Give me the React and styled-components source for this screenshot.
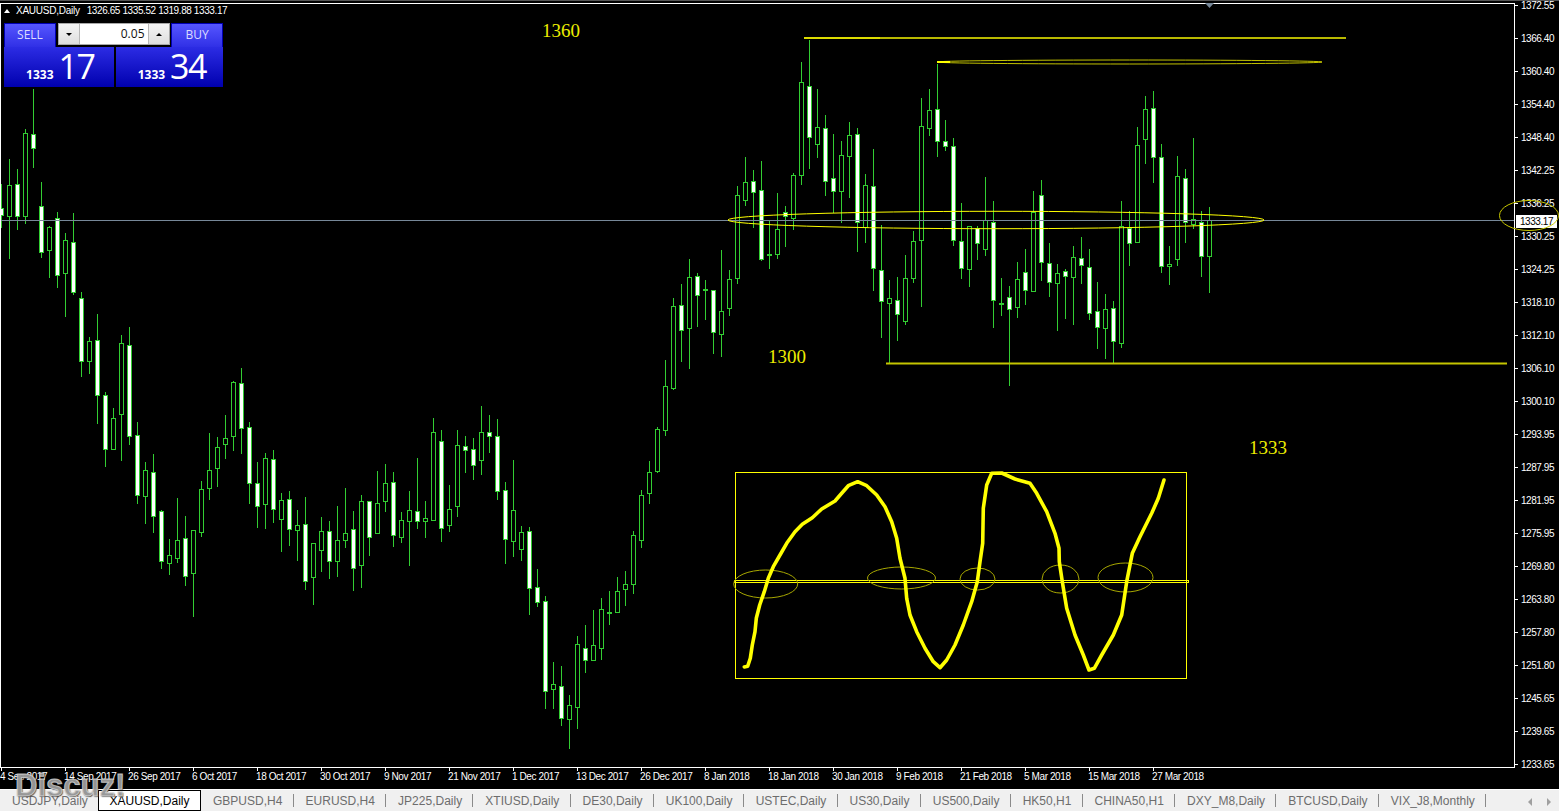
import React from 'react';
import styled, { createGlobalStyle } from 'styled-components';

const GlobalStyle = createGlobalStyle`
  html, body {
    margin: 0;
    padding: 0;
    background: #000;
    overflow: hidden;
  }
`;

const UP = '#32cd32';
const YELLOW = '#ffff00';
const AXIS_FONT = `'Liberation Sans', Arial, sans-serif`;

// [high, low, bodyTop, bodyBottom, bearish] in page pixels, one candle every 8px from x=1
const candles = [
  [184, 228, 208, 215, 1], [159, 259, 185, 216, 0], [169, 230, 184, 216, 1], [129, 224, 133, 216, 0],
  [89, 168, 134, 148, 1], [182, 258, 206, 252, 1], [226, 278, 227, 250, 0], [212, 288, 218, 275, 1],
  [233, 317, 240, 273, 0], [213, 295, 242, 292, 1], [292, 377, 298, 361, 1], [337, 374, 341, 361, 0],
  [314, 424, 340, 395, 1], [392, 467, 395, 449, 1], [408, 450, 418, 449, 0], [335, 461, 343, 414, 0],
  [327, 445, 345, 436, 1], [422, 504, 435, 495, 1], [462, 524, 470, 496, 0], [454, 533, 472, 516, 1],
  [510, 569, 511, 561, 1], [539, 575, 555, 563, 0], [498, 563, 540, 558, 0], [516, 586, 538, 576, 1],
  [530, 617, 530, 573, 0], [481, 537, 489, 532, 0], [433, 500, 470, 488, 0], [437, 487, 447, 468, 0],
  [415, 459, 438, 444, 0], [381, 451, 382, 436, 0], [368, 454, 383, 428, 1], [422, 504, 427, 483, 1],
  [462, 528, 483, 506, 1], [453, 529, 458, 504, 0], [450, 523, 459, 509, 1], [493, 552, 500, 519, 0],
  [491, 546, 499, 529, 1], [510, 561, 525, 530, 0], [497, 590, 524, 581, 1], [543, 605, 543, 577, 0],
  [517, 572, 531, 550, 0], [521, 579, 531, 561, 1], [506, 577, 540, 561, 0], [488, 548, 533, 540, 0],
  [511, 591, 529, 568, 1], [495, 588, 501, 565, 0], [501, 556, 501, 537, 1], [471, 533, 503, 533, 0],
  [464, 512, 483, 501, 0], [472, 547, 482, 535, 1], [512, 543, 520, 537, 0], [491, 566, 510, 521, 0],
  [458, 529, 511, 521, 1], [501, 538, 518, 521, 0], [418, 521, 432, 520, 0], [430, 542, 441, 528, 1],
  [485, 532, 509, 525, 0], [430, 517, 445, 506, 0], [436, 473, 446, 450, 1], [438, 480, 449, 465, 1],
  [406, 475, 432, 460, 0], [415, 453, 432, 436, 1], [419, 500, 436, 491, 1], [482, 564, 490, 539, 1],
  [460, 557, 510, 541, 0], [526, 561, 532, 549, 0], [527, 615, 531, 588, 1], [569, 607, 587, 602, 1],
  [596, 709, 601, 691, 1], [662, 709, 684, 689, 0], [666, 726, 686, 718, 1], [695, 749, 705, 719, 0],
  [636, 729, 644, 707, 0], [625, 673, 648, 660, 1], [610, 660, 645, 660, 0], [598, 660, 609, 648, 0],
  [591, 625, 612, 613, 2], [577, 612, 591, 612, 0], [571, 606, 584, 589, 0], [531, 594, 535, 584, 0],
  [490, 548, 495, 540, 0], [461, 504, 472, 493, 0], [427, 473, 429, 471, 0], [360, 436, 386, 430, 0],
  [298, 390, 306, 388, 0], [284, 362, 305, 330, 1], [259, 369, 277, 328, 0], [273, 327, 276, 295, 1],
  [280, 320, 289, 290, 2], [290, 354, 290, 332, 1], [250, 357, 311, 334, 0], [270, 316, 279, 308, 0],
  [186, 284, 195, 278, 0], [157, 206, 182, 200, 0], [170, 228, 181, 192, 1], [161, 261, 190, 259, 1],
  [221, 269, 254, 255, 2], [193, 259, 229, 254, 0], [206, 247, 212, 216, 1], [173, 230, 175, 218, 0],
  [62, 185, 82, 175, 0], [40, 169, 86, 137, 1], [89, 158, 127, 144, 0], [115, 196, 128, 181, 1],
  [134, 213, 178, 191, 1], [141, 223, 155, 191, 0], [122, 198, 135, 156, 0], [128, 252, 134, 222, 1],
  [174, 243, 185, 227, 0], [149, 291, 186, 268, 1], [225, 338, 270, 301, 1], [280, 363, 298, 303, 0],
  [277, 341, 300, 314, 1], [255, 325, 278, 321, 0], [231, 283, 241, 278, 0], [98, 307, 126, 240, 0],
  [89, 136, 110, 128, 0], [64, 157, 109, 141, 1], [120, 151, 141, 146, 1], [138, 246, 146, 240, 1],
  [203, 279, 241, 268, 1], [226, 287, 226, 269, 0], [226, 260, 228, 243, 1], [177, 256, 220, 249, 0],
  [201, 328, 222, 300, 1], [278, 316, 303, 304, 2], [286, 386, 297, 309, 1], [262, 318, 279, 307, 0],
  [249, 305, 272, 290, 1], [191, 292, 212, 291, 0], [180, 281, 195, 262, 1], [243, 297, 263, 282, 1],
  [264, 331, 273, 283, 0], [269, 319, 271, 276, 1], [246, 325, 257, 277, 0], [237, 284, 258, 265, 1],
  [249, 320, 267, 313, 1], [282, 349, 311, 327, 1], [294, 359, 309, 328, 0], [301, 363, 308, 341, 1],
  [201, 348, 226, 343, 0], [211, 266, 228, 243, 1], [127, 243, 145, 242, 0], [96, 164, 109, 139, 0],
  [91, 183, 108, 157, 1], [144, 273, 157, 266, 1], [246, 285, 264, 266, 0], [156, 266, 176, 259, 0],
  [169, 243, 178, 222, 1], [138, 229, 219, 224, 0], [211, 277, 222, 256, 1], [207, 293, 220, 256, 0],
];

const priceLabels = [
  '1372.55', '1366.40', '1360.40', '1354.40', '1348.40', '1342.25', '1336.25', '1330.25',
  '1324.25', '1318.10', '1312.10', '1306.10', '1300.10', '1293.95', '1287.95', '1281.95',
  '1275.95', '1269.80', '1263.80', '1257.80', '1251.80', '1245.65', '1239.65', '1233.65',
];

const dateLabels = [
  '4 Sep 2017', '14 Sep 2017', '26 Sep 2017', '6 Oct 2017', '18 Oct 2017', '30 Oct 2017', '9 Nov 2017',
  '21 Nov 2017', '1 Dec 2017', '13 Dec 2017', '26 Dec 2017', '8 Jan 2018', '18 Jan 2018', '30 Jan 2018',
  '9 Feb 2018', '21 Feb 2018', '5 Mar 2018', '15 Mar 2018', '27 Mar 2018',
];

const tabs = [
  'USDJPY,Daily', 'XAUUSD,Daily', 'GBPUSD,H4', 'EURUSD,H4', 'JP225,Daily', 'XTIUSD,Daily', 'DE30,Daily',
  'UK100,Daily', 'USTEC,Daily', 'US30,Daily', 'US500,Daily', 'HK50,H1', 'CHINA50,H1', 'DXY_M8,Daily',
  'BTCUSD,Daily', 'VIX_J8,Monthly',
];

// hand drawn curve, sampled from the picture at 3x around (725, 465)
const curve = [
  [58, 606], [68, 604], [76, 580], [82, 540], [90, 500], [94, 460], [104, 420], [118, 380], [130, 340], [145, 305],
  [165, 270], [185, 235], [210, 200], [232, 178], [262, 158], [290, 132], [330, 108], [350, 85], [370, 62], [398, 50],
  [425, 62], [455, 90], [480, 125], [500, 170], [515, 220], [525, 280], [540, 340], [545, 400], [555, 450], [575, 500],
  [600, 550], [625, 590], [645, 608], [665, 585], [690, 540], [715, 480], [740, 410], [757, 350], [765, 290], [773, 235],
  [775, 130], [785, 60], [800, 25], [830, 24], [870, 42], [915, 55], [935, 85], [965, 140], [990, 205], [1002, 250],
  [1003, 290], [1012, 350], [1025, 430], [1050, 510], [1075, 570], [1092, 615], [1108, 610], [1130, 570], [1165, 510],
  [1190, 450], [1205, 350], [1222, 265], [1245, 215], [1280, 145], [1300, 100], [1317, 45],
]
  .map(([x, y]) => `${(725 + x / 3).toFixed(1)},${(465 + y / 3).toFixed(1)}`)
  .join(' ');

const Page = styled.div`
  position: relative;
  width: 1559px;
  height: 811px;
  display: flex;
  flex-direction: column;
  background: #000;
  overflow: hidden;
  font-family: ${AXIS_FONT};
`;

const TopStrip = styled.div`
  height: 1px;
  margin-bottom: 1px;
  border-top: 1px solid #555;
  flex: none;
`;

const ChartRow = styled.div`
  display: flex;
  height: 765px;
  flex: none;
`;

const Plot = styled.div`
  width: 1513px;
  height: 763px;
  border: 1px solid #fff;
  flex: none;
  overflow: hidden;
`;

const PlotSvg = styled.svg`
  display: block;
`;

const PriceAxis = styled.div`
  flex: 1;
  padding-top: 2px;
`;

const PriceRow = styled.div`
  height: 33px;
  display: flex;
  align-items: flex-start;
  color: #fff;
  font-size: 10px;
  letter-spacing: -0.45px;
  line-height: 13px;
  &::before {
    content: '';
    width: 3px;
    height: 1px;
    margin-right: 3px;
    background: #fff;
  }
`;

const PriceText = styled.span`
  margin-top: -6px;
`;

const TimeAxis = styled.div`
  display: flex;
  height: 21px;
  padding-left: 1px;
  flex: none;
`;

const TimeCell = styled.div`
  width: 64px;
  flex: none;
  position: relative;
  color: #fff;
  font-size: 10px;
  letter-spacing: -0.4px;
  line-height: 13px;
  white-space: nowrap;
  text-indent: -1px;
  padding-top: 2px;
  &::before {
    content: '';
    position: absolute;
    left: 0;
    top: 0;
    width: 1px;
    height: 3px;
    background: #fff;
  }
`;

const TabBar = styled.div`
  flex: 1;
  display: flex;
  align-items: stretch;
  border-top: 1px solid #fff;
  background: #f0f0f0;
  font-size: 12px;
  line-height: 23px;
  color: #6d6d6d;
`;

const Tab = styled.div`
  padding: 0 11.2px 0 12px;
  white-space: nowrap;
  position: relative;
  ${p =>
    p.$active
      ? `
    margin-left: -1px;
    padding: 0 10.5px;
    color: #000;
    background: #fff;
    border: 1px solid #000;
    border-bottom-width: 2px;
    line-height: 21px;
    height: 19px;
  `
      : `
    &:not(:first-child)::after {
      content: '';
      position: absolute;
      right: 0;
      top: 4px;
      width: 1px;
      height: 13px;
      background: #8a8a8a;
    }
  `}
`;

const TabArrows = styled.div`
  margin-left: auto;
  display: flex;
  align-items: center;
  gap: 15px;
  padding-right: 8px;
`;

const TabArrow = styled.span`
  width: 0;
  height: 0;
  border-top: 4px solid transparent;
  border-bottom: 4px solid transparent;
  ${p => (p.$left ? 'border-right: 4px solid #a0a0a0;' : 'border-left: 4px solid #a0a0a0;')}
`;

const DrawingLayer = styled.svg`
  position: absolute;
  left: 0;
  top: 0;
  pointer-events: none;
`;

const ChartTitle = styled.div`
  position: absolute;
  left: 4px;
  top: 4px;
  display: flex;
  align-items: center;
  color: #fff;
  font-size: 10px;
  letter-spacing: -0.25px;
  line-height: 14px;
  white-space: nowrap;
`;

const TitleMark = styled.span`
  width: 0;
  height: 0;
  margin-right: 6px;
  border-left: 3px solid transparent;
  border-right: 3px solid transparent;
  border-bottom: 4px solid #fff;
`;

const TitleValues = styled.span`
  margin-left: 7px;
  letter-spacing: -0.4px;
`;

const PriceTag = styled.div`
  position: absolute;
  left: 1516px;
  top: 215px;
  width: 41px;
  height: 13px;
  background: #fff;
  color: #000;
  font-size: 10px;
  letter-spacing: -0.45px;
  line-height: 13px;
  text-align: center;
`;

const Note = styled.div`
  position: absolute;
  left: ${p => p.$x}px;
  top: ${p => p.$y}px;
  color: #eded00;
  font-family: 'Liberation Serif', 'Times New Roman', serif;
  font-size: 19px;
  line-height: 22px;
`;

const Watermark = styled.div`
  position: absolute;
  left: 15px;
  top: 768px;
  font-family: 'Liberation Sans', Arial, sans-serif;
  font-weight: 700;
  font-size: 31px;
  line-height: 36px;
  color: rgba(160, 160, 160, 0.92);
  -webkit-text-stroke: 1px rgba(215, 215, 215, 0.8);
  text-shadow: 1px 1px 1px rgba(40, 40, 40, 0.8);
`;

const TradePanel = styled.div`
  position: absolute;
  left: 4px;
  top: 23px;
  width: 219px;
  display: flex;
  flex-direction: column;
  font-family: 'Open Sans', 'Liberation Sans', sans-serif;
`;

const TradeTop = styled.div`
  display: flex;
  justify-content: space-between;
  align-items: flex-start;
  height: 24px;
`;

const SideButton = styled.div`
  box-sizing: border-box;
  width: 52px;
  height: 24px;
  padding: 0 3px;
  background: linear-gradient(#5656ff, #3030e6);
  border: 1px solid #0000b4;
  border-bottom: none;
  color: #dcdcff;
  font-size: 12px;
  line-height: 22px;
  text-align: center;
`;

const SideLabel = styled.div`
  height: 23px;
  border-bottom: 1px solid #6f7fff;
`;

const Spinner = styled.div`
  box-sizing: border-box;
  width: 112px;
  height: 22px;
  display: flex;
  background: #fff;
  border: 1px solid #a8a8a8;
`;

const SpinButton = styled.div`
  width: 20px;
  flex: none;
  display: flex;
  align-items: center;
  justify-content: center;
  background: linear-gradient(#f4f4f4, #dedede);
  ${p => (p.$right ? 'border-left: 1px solid #b8b8b8;' : 'border-right: 1px solid #b8b8b8;')}
  &::before {
    content: '';
    border-left: 3px solid transparent;
    border-right: 3px solid transparent;
    ${p => (p.$right ? 'border-bottom: 3px solid #000;' : 'border-top: 3px solid #000;')}
  }
`;

const SpinValue = styled.div`
  flex: 1;
  padding-right: 3px;
  text-align: right;
  color: #111;
  font-size: 12px;
  line-height: 19px;
`;

const TradeBottom = styled.div`
  display: flex;
  gap: 2px;
  height: 40px;
`;

const Quote = styled.div`
  box-sizing: border-box;
  flex: ${p => p.$grow};
  display: flex;
  justify-content: flex-end;
  align-items: baseline;
  gap: 5px;
  padding-right: ${p => p.$pad}px;
  background: linear-gradient(#2c2ce4, #0000ae);
  color: #fff;
  line-height: 38px;
`;

const QuoteBase = styled.span`
  font-size: 12px;
  font-weight: 700;
`;

const QuotePips = styled.span`
  font-size: 34px;
  letter-spacing: -1.5px;
`;

const Candle = ({ data, index }) => {
  const [high, low, top, bottom, kind] = data;
  const x = 1 + index * 8;
  return (
    <g>
      <line x1={x + 0.5} x2={x + 0.5} y1={high} y2={low} stroke={UP} />
      {kind === 2 ? (
        <rect x={x - 2} y={top} width={5} height={2} fill={UP} />
      ) : (
        <rect
          x={x - 1.5}
          y={top + 0.5}
          width={4}
          height={Math.max(bottom - top, 2)}
          fill={kind ? '#fff' : '#000'}
          stroke={UP}
        />
      )}
    </g>
  );
};

const Drawings = () => (
  <DrawingLayer width="1559" height="811" viewBox="0 0 1559 811">
    <g fill="none" stroke={YELLOW}>
      <line x1="804" x2="1346" y1="38" y2="38" stroke="#b8b800" strokeWidth="2" />
      <line x1="804" x2="880" y1="38" y2="38" strokeWidth="1" />
      <ellipse cx="1129.5" cy="62" rx="192.5" ry="2" strokeWidth="0.9" opacity="0.85" />
      <line x1="937" x2="950" y1="62" y2="62" strokeWidth="2" />
      <ellipse cx="996" cy="220" rx="268" ry="8.7" strokeWidth="1" />
      <line x1="886" x2="1507" y1="363.5" y2="363.5" stroke="#c4c400" strokeWidth="2" />
      <ellipse cx="1529" cy="215.5" rx="29.5" ry="15" stroke="#c9c900" strokeWidth="1" />
      <rect x="735.5" y="472.5" width="451" height="206" strokeWidth="1" />
      <rect x="734.5" y="580.5" width="454" height="2" strokeWidth="1" />
      <g stroke="#a8a800" strokeWidth="1">
        <ellipse cx="765.7" cy="584" rx="32" ry="14" />
        <ellipse cx="901.5" cy="578" rx="34" ry="11" />
        <ellipse cx="977.5" cy="579" rx="17.5" ry="11" />
        <ellipse cx="1060.5" cy="579" rx="18.5" ry="14" />
        <ellipse cx="1125.5" cy="577.5" rx="27.5" ry="14.5" />
      </g>
      <polyline points={curve} strokeWidth="3.6" strokeLinejoin="round" strokeLinecap="round" />
    </g>
    <polygon points="1205,3 1214,3 1209.5,8" fill="#778899" />
  </DrawingLayer>
);

export default function App() {
  return (
    <Page>
      <GlobalStyle />
      <TopStrip />
      <ChartRow>
        <Plot>
          <PlotSvg width="1513" height="763" viewBox="1 4 1513 763" shapeRendering="crispEdges">
            {candles.map((c, i) => (
              <Candle key={i} data={c} index={i} />
            ))}
            <line x1="1" x2="1514" y1="220.5" y2="220.5" stroke="#778899" />
          </PlotSvg>
        </Plot>
        <PriceAxis>
          {priceLabels.map(p => (
            <PriceRow key={p}>
              <PriceText>{p}</PriceText>
            </PriceRow>
          ))}
        </PriceAxis>
      </ChartRow>
      <TimeAxis>
        {dateLabels.map(d => (
          <TimeCell key={d}>{d}</TimeCell>
        ))}
      </TimeAxis>
      <TabBar>
        {tabs.map((t, i) => (
          <Tab key={t} $active={i === 1}>
            {t}
          </Tab>
        ))}
        <TabArrows>
          <TabArrow $left />
          <TabArrow />
        </TabArrows>
      </TabBar>

      <ChartTitle>
        <TitleMark />
        XAUUSD,Daily
        <TitleValues>1326.65 1335.52 1319.88 1333.17</TitleValues>
      </ChartTitle>

      <TradePanel>
        <TradeTop>
          <SideButton>
            <SideLabel>SELL</SideLabel>
          </SideButton>
          <Spinner>
            <SpinButton />
            <SpinValue>0.05</SpinValue>
            <SpinButton $right />
          </Spinner>
          <SideButton>
            <SideLabel>BUY</SideLabel>
          </SideButton>
        </TradeTop>
        <TradeBottom>
          <Quote $grow="109" $pad={20}>
            <QuoteBase>1333</QuoteBase>
            <QuotePips>17</QuotePips>
          </Quote>
          <Quote $grow="108" $pad={17}>
            <QuoteBase>1333</QuoteBase>
            <QuotePips>34</QuotePips>
          </Quote>
        </TradeBottom>
      </TradePanel>

      <PriceTag>1333.17</PriceTag>
      <Note $x={542} $y={20}>1360</Note>
      <Note $x={768} $y={346}>1300</Note>
      <Note $x={1249} $y={437}>1333</Note>
      <Drawings />
      <Watermark>Discuz!</Watermark>
    </Page>
  );
}
